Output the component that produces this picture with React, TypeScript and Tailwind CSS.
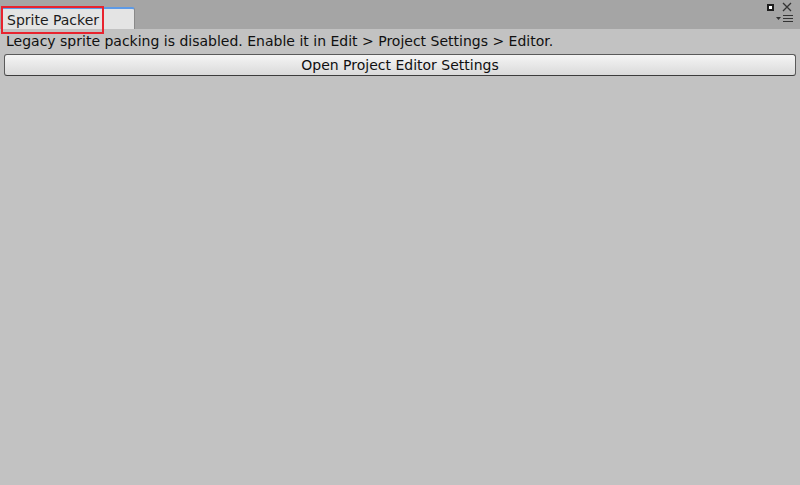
import React from "react";

export default function App() {
  return (
    <div className="w-[800px] h-[485px] flex flex-col bg-[#c2c2c2] overflow-hidden" style={{ fontFamily: '"DejaVu Sans", sans-serif' }}>
      <div className="relative h-[29px] bg-[#a5a5a5] flex items-end pl-[2px] shrink-0">
        <div className="w-[133px] h-[22px] bg-[#e4e4e4] border-t-2 border-t-[#5d9ae6] border-r border-r-[#8a8a8a] rounded-tr-[3px] flex items-center pl-[5px] text-[14px] text-[#1c1c1c] leading-none pt-[1px]">
          Sprite Packer
        </div>
        <div className="absolute left-[1px] top-[6px] w-[103px] h-[28px] border-2 border-[#e8232e] z-10" />
        <div className="absolute right-[26px] top-[4px] w-[7px] h-[7px] border-2 border-[#1e1e1e] bg-white" />
        <svg className="absolute right-[8px] top-[2px]" width="10" height="10" viewBox="0 0 10 10">
          <path d="M1 1L9 9M9 1L1 9" stroke="#333" strokeWidth="1.3" />
        </svg>
        <svg className="absolute right-[5px] top-[14px]" width="20" height="9" viewBox="0 0 20 9">
          <path d="M1 3h5l-2.5 3z" fill="#333" />
          <path d="M8 1.5h10M8 4.5h10M8 7.5h10" stroke="#333" strokeWidth="1.2" />
        </svg>
      </div>
      <div className="flex flex-col px-[4px] pt-[2px]">
        <div className="text-[14px] text-[#101010] h-[20px] leading-[20px] pl-[2px]">
          Legacy sprite packing is disabled. Enable it in Edit &gt; Project Settings &gt; Editor.
        </div>
        <button className="mt-[3px] h-[22px] w-full rounded-[3px] border border-[#5a5a5a] border-b-[#3c3c3c] bg-gradient-to-b from-[#f5f5f5] to-[#dadada] text-[14px] text-[#101010] flex items-center justify-center leading-none">
          Open Project Editor Settings
        </button>
      </div>
    </div>
  );
}
